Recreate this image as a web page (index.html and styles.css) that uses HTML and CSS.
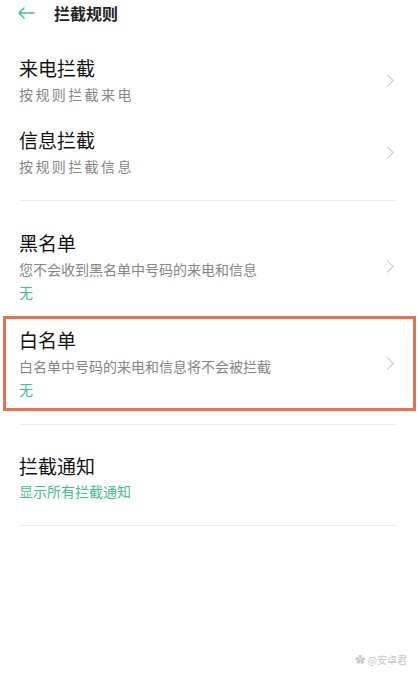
FILE: index.html
```html
<!DOCTYPE html>
<html>
<head>
    <meta charset="utf-8">
    <title>拦截规则</title>
    <link rel="stylesheet" href="styles.css">
</head>
<body>
    <div class="header">
        <svg class="back" width="18" height="12" viewBox="0 0 18 12">
            <path d="M17 6H2M7 1L2 6l5 5" fill="none" stroke="#45c08e" stroke-width="1.6" stroke-linecap="round" stroke-linejoin="round"/>
        </svg>
        <span class="header-title">拦截规则</span>
    </div>

    <div class="group first">
        <div class="row">
            <div class="row-text">
                <div class="row-title">来电拦截</div>
                <div class="row-sub wide">按规则拦截来电</div>
            </div>
            <span class="chevron"></span>
        </div>
        <div class="row">
            <div class="row-text">
                <div class="row-title">信息拦截</div>
                <div class="row-sub wide">按规则拦截信息</div>
            </div>
            <span class="chevron"></span>
        </div>
    </div>

    <div class="group">
        <div class="row tall">
            <div class="row-text">
                <div class="row-title">黑名单</div>
                <div class="row-sub">您不会收到黑名单中号码的来电和信息</div>
                <div class="row-status">无</div>
            </div>
            <span class="chevron"></span>
        </div>
        <div class="row tall marked">
            <div class="row-text">
                <div class="row-title">白名单</div>
                <div class="row-sub">白名单中号码的来电和信息将不会被拦截</div>
                <div class="row-status">无</div>
            </div>
            <span class="chevron"></span>
        </div>
    </div>

    <div class="group">
        <div class="row">
            <div class="row-text">
                <div class="row-title">拦截通知</div>
                <div class="row-status">显示所有拦截通知</div>
            </div>
        </div>
    </div>

    <div class="watermark">✿ @安卓君</div>
</body>
</html>
```

FILE: styles.css
```css
body {
    margin: 0;
    width: 419px;
    height: 676px;
    position: relative;
    overflow: hidden;
    background-color: #fff;
    font-family: "Noto Sans CJK SC", "Noto Sans", sans-serif;
    color: #1c1c1c;
}
.header {
    display: flex;
    align-items: center;
    height: 26px;
    padding: 0 0 3px 17px;
}
.back {
    display: block;
}
.header-title {
    margin-left: 19px;
    font-size: 16px;
    font-weight: 700;
    color: #222;
}
.group {
    margin: 0 23px 0 19px;
    padding: 17px 0 12px;
    border-bottom: 1px solid #ececec;
}
.group.first {
    padding-top: 15px;
}
.row {
    position: relative;
    display: flex;
    align-items: center;
    justify-content: space-between;
    padding: 12px 0;
}
.row.tall {
    padding: 13px 0;
}
.row.marked::after {
    content: "";
    position: absolute;
    top: 1px;
    bottom: 1px;
    left: -16px;
    right: -20px;
    border: 3px solid #e8724f;
}
.row-title {
    font-size: 19px;
    line-height: 24px;
    font-weight: 400;
    color: #111;
}
.row-sub {
    margin-top: 4px;
    font-size: 14px;
    line-height: 20px;
    color: #858585;
}
.row-sub.wide {
    letter-spacing: 2.4px;
}
.row-status {
    margin-top: 3px;
    font-size: 14px;
    line-height: 20px;
    color: #3fbf8b;
}
.row-title + .row-status {
    margin-top: 3px;
}
.chevron {
    width: 8px;
    height: 8px;
    margin-right: 4px;
    border-top: 1.3px solid #c4c4c4;
    border-right: 1.3px solid #c4c4c4;
    transform: rotate(45deg);
}
.watermark {
    position: absolute;
    right: 12px;
    bottom: 9px;
    font-size: 10px;
    color: #c6c6c6;
}
```
